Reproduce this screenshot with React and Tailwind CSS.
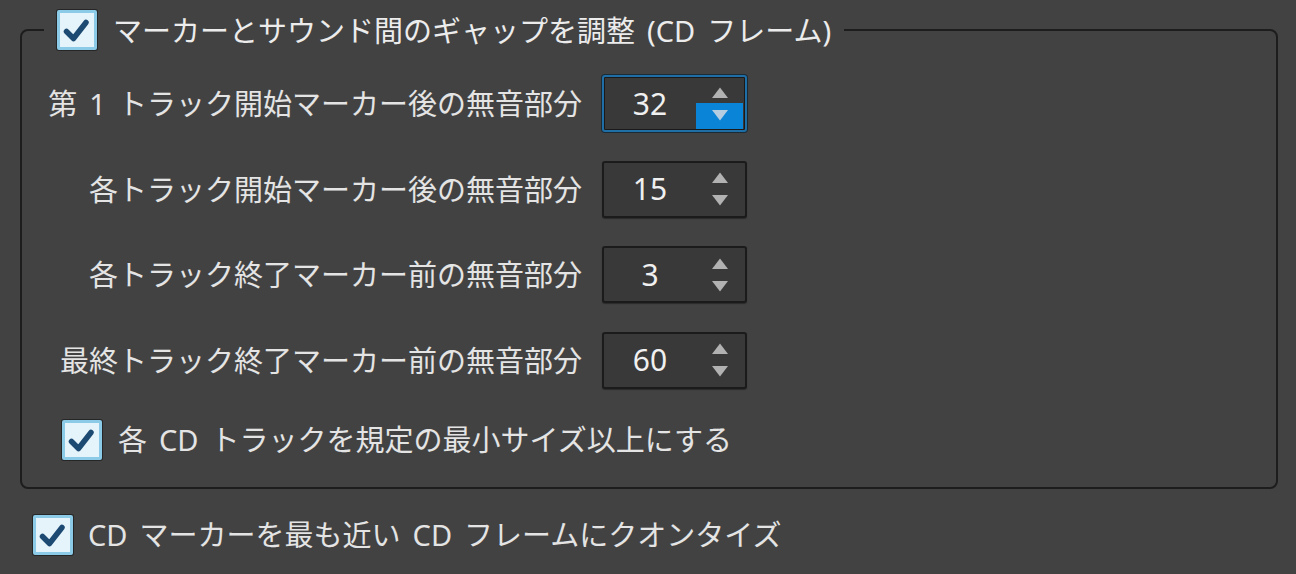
import React from "react";

const FONT = {
  fontFamily: '"Noto Sans", "Noto Sans CJK JP", sans-serif',
  wordSpacing: "4.5px",
};

function CheckBox() {
  return (
    <div className="w-[40px] h-[40px] shrink-0 rounded-[2px] border-[3px] border-[#8ccbe7] bg-[#e5f3fb] shadow-[0_0_0_1px_#262626]">
      <svg viewBox="0 0 34 34" className="w-full h-full">
        <path
          d="M6.5 18.5 L13.5 25.5 L26 9.5"
          fill="none"
          stroke="#1c4a72"
          strokeWidth="5.5"
          strokeLinecap="round"
          strokeLinejoin="round"
        />
      </svg>
    </div>
  );
}

function Arrow({ down, color }) {
  return (
    <svg width="16" height="11" viewBox="0 0 16 11">
      {down ? (
        <path d="M0 0 H16 L8 10.5 Z" fill={color} />
      ) : (
        <path d="M8 0.5 L16 11 H0 Z" fill={color} />
      )}
    </svg>
  );
}

function SpinBox({ value, focused }) {
  return (
    <div
      className={
        "w-[145px] h-[57px] shrink-0 rounded-[3px] border-2 bg-[#393939] flex " +
        (focused
          ? "border-[#1f6ea5] shadow-[0_0_0_1px_#1b2b36,inset_0_0_0_1px_#1a1a1a]"
          : "border-[#1b1b1b] shadow-[0_1px_1px_#2b2b2b]")
      }
    >
      <div className="flex-1 flex items-center justify-center text-[30px] leading-none text-[#f0f0f0]">
        {value}
      </div>
      <div className="w-[47px] mr-[2px] flex flex-col py-[1px]">
        <div className="flex-1 flex items-end justify-center pb-[5px]">
          <Arrow color="#b2b2b2" />
        </div>
        <div
          className={
            "flex-1 flex items-start justify-center pt-[7px] " +
            (focused ? "bg-[#0a84d6]" : "")
          }
        >
          <Arrow down color={focused ? "#b4cde0" : "#b2b2b2"} />
        </div>
      </div>
    </div>
  );
}

function Row({ label, value, focused }) {
  return (
    <div className="flex items-center h-[57px]">
      <div className="w-[560px] text-right text-[29px] leading-none text-[#e4e4e4] whitespace-nowrap">
        {label}
      </div>
      <div className="ml-[20px]">
        <SpinBox value={value} focused={focused} />
      </div>
    </div>
  );
}

export default function App() {
  return (
    <div style={FONT} className="w-[1296px] h-[574px] bg-[#424242] overflow-hidden">
      <fieldset className="ml-[20px] mt-[10px] w-[1258px] border-2 border-[#1d1d1d] rounded-[8px] pb-[27px]">
        <legend className="ml-[22px] px-[13px]">
          <div className="flex items-center gap-[16px]">
            <CheckBox />
            <span className="text-[29px] leading-none text-[#ececec] whitespace-nowrap">
              マーカーとサウンド間のギャップを調整 (CD フレーム)
            </span>
          </div>
        </legend>

        <div className="pt-[25px] flex flex-col gap-[28.5px]">
          <Row label="第 1 トラック開始マーカー後の無音部分" value="32" focused />
          <Row label="各トラック開始マーカー後の無音部分" value="15" />
          <Row label="各トラック終了マーカー前の無音部分" value="3" />
          <Row label="最終トラック終了マーカー前の無音部分" value="60" />
        </div>

        <div className="mt-[31px] ml-[40px] flex items-center gap-[16px]">
          <CheckBox />
          <span className="text-[29px] leading-none text-[#e4e4e4] whitespace-nowrap">
            各 CD トラックを規定の最小サイズ以上にする
          </span>
        </div>
      </fieldset>

      <div className="mt-[26px] ml-[33px] flex items-center gap-[15px]">
        <CheckBox />
        <span className="text-[29px] leading-none text-[#e4e4e4] whitespace-nowrap">
          CD マーカーを最も近い CD フレームにクオンタイズ
        </span>
      </div>
    </div>
  );
}
